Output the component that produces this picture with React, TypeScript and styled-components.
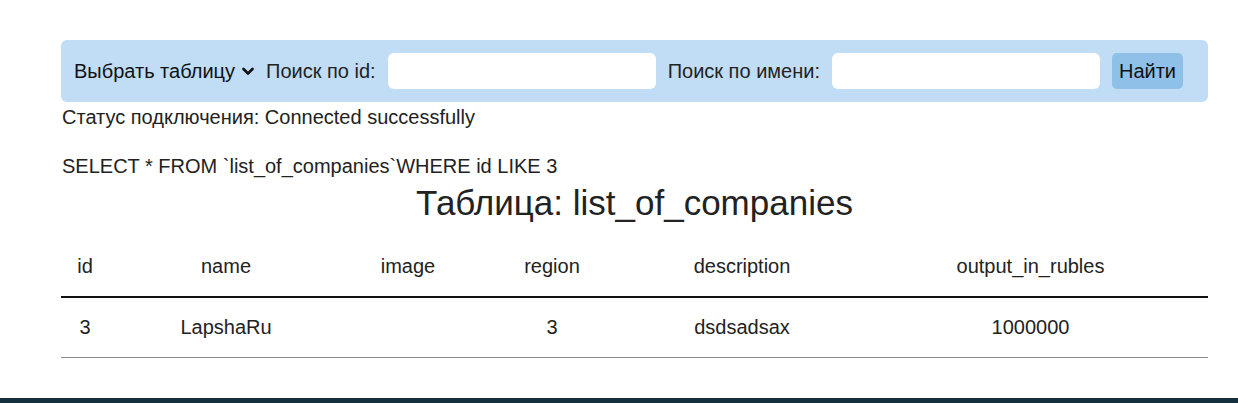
import React from "react";
import styled, { createGlobalStyle } from "styled-components";

const Global = createGlobalStyle`
  html, body { margin: 0; padding: 0; background: #ffffff; }
  body { font-family: "Liberation Sans", Arial, sans-serif; color: #212529; }
  * { box-sizing: border-box; }
`;

const Page = styled.div`
  display: flex;
  flex-direction: column;
  min-height: 403px;
`;

const Main = styled.main`
  width: 1147px;
  margin: 40px 0 0 61px;
  flex: 1;
`;

const Toolbar = styled.form`
  display: flex;
  align-items: center;
  gap: 12px;
  height: 62px;
  padding: 0 13px;
  background: #c0ddf5;
  border-radius: 6px;
`;

const SelectBox = styled.div`
  display: flex;
  align-items: center;
  gap: 7px;
  font-size: 20px;
  color: #111;
`;

const Label = styled.label`
  font-size: 20px;
  color: #222;
`;

const Input = styled.input`
  width: 268px;
  height: 36px;
  border: none;
  border-radius: 6px;
  background: #fff;
  outline: none;
`;

const Button = styled.button`
  height: 36px;
  padding: 0 7px;
  border: none;
  border-radius: 5px;
  background: #8fc0e8;
  font-family: inherit;
  font-size: 20px;
  color: #111;
`;

const Status = styled.p`
  margin: 4px 0 0 1px;
  font-size: 20px;
  line-height: 23px;
  color: #222;
`;

const Query = styled.p`
  margin: 26px 0 0 1px;
  font-size: 20px;
  line-height: 23px;
  color: #222;
`;

const Title = styled.h1`
  margin: 5px 0 0;
  text-align: center;
  font-weight: 400;
  font-size: 35px;
  line-height: 40px;
  color: #222;
`;

const Table = styled.table`
  width: 100%;
  margin-top: 13px;
  border-collapse: collapse;
  table-layout: fixed;
  font-size: 20px;
  color: #222;
`;

const Th = styled.th<{ $w: number }>`
  width: ${(p) => p.$w}px;
  height: 61px;
  padding: 0;
  font-weight: 400;
  text-align: center;
  border-bottom: 2px solid #111;
`;

const Td = styled.td`
  height: 60px;
  padding: 0;
  text-align: center;
  border-bottom: 1px solid #8a8a8a;
`;

const Footer = styled.footer`
  height: 5px;
  background: #14303f;
`;

const Chevron = () => (
  <svg width="12" height="9" viewBox="0 0 12 9">
    <path d="M1.5 2 L6 6.5 L10.5 2" fill="none" stroke="#111" strokeWidth="2.6" strokeLinecap="round" strokeLinejoin="round" />
  </svg>
);

const columns: [string, number][] = [
  ["id", 48],
  ["name", 234],
  ["image", 130],
  ["region", 158],
  ["description", 222],
  ["output_in_rubles", 355],
];

const row = ["3", "LapshaRu", "", "3", "dsdsadsax", "1000000"];

export default function App() {
  return (
    <Page>
      <Global />
      <Main>
        <Toolbar onSubmit={(e) => e.preventDefault()}>
          <SelectBox>
            Выбрать таблицу <Chevron />
          </SelectBox>
          <Label>Поиск по id:</Label>
          <Input />
          <Label>Поиск по имени:</Label>
          <Input />
          <Button type="submit">Найти</Button>
        </Toolbar>
        <Status>Статус подключения: Connected successfully</Status>
        <Query>SELECT * FROM `list_of_companies`WHERE id LIKE 3</Query>
        <Title>Таблица: list_of_companies</Title>
        <Table>
          <thead>
            <tr>
              {columns.map(([c, w]) => (
                <Th key={c} $w={w}>{c}</Th>
              ))}
            </tr>
          </thead>
          <tbody>
            <tr>
              {row.map((v, i) => (
                <Td key={i}>{v}</Td>
              ))}
            </tr>
          </tbody>
        </Table>
      </Main>
      <Footer />
    </Page>
  );
}
